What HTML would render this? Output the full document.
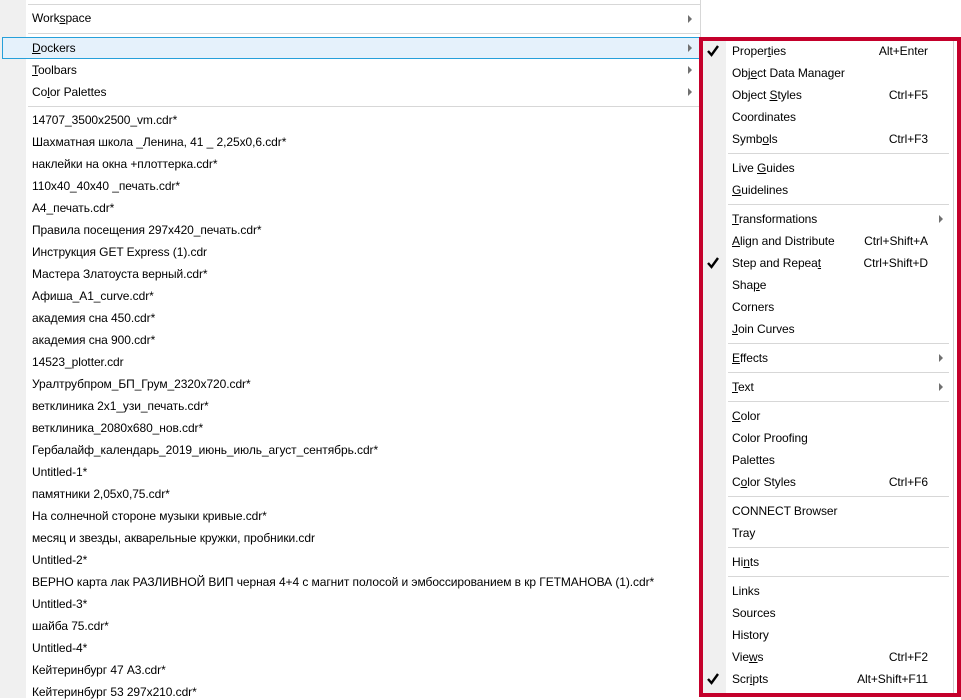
<!DOCTYPE html>
<html><head><meta charset="utf-8"><style>
*{margin:0;padding:0;box-sizing:border-box}
body{width:961px;height:698px;overflow:hidden;background:#fff;position:relative;font-family:"Segoe UI","Liberation Sans","DejaVu Sans",sans-serif;font-size:12px;letter-spacing:-0.07px;color:#000}
.a{position:absolute;white-space:nowrap;line-height:16px}
.sep{position:absolute;height:1px;background:#d7d7d7}
.arr{position:absolute;width:0;height:0;border-top:4px solid transparent;border-bottom:4px solid transparent;border-left:4px solid #707070}
u{text-decoration:underline}
.r{position:absolute;white-space:nowrap;line-height:16px;right:0;text-align:right}
</style></head><body>
<div style="position:absolute;left:0;top:0;width:26px;height:698px;background:#f0f0f0"></div>
<div style="position:absolute;left:700px;top:0;width:1px;height:40px;background:#d7d7d7"></div>
<div class="sep" style="left:28px;top:4px;width:672px"></div>
<div class="sep" style="left:28px;top:33px;width:672px"></div>
<div class="sep" style="left:28px;top:106px;width:672px"></div>
<div style="position:absolute;left:2px;top:37px;width:698px;height:22px;background:#e5f1fb;border:1px solid #26a0da"></div>
<div class="a" style="left:32px;top:10px">Work<u>s</u>pace</div>
<div class="arr" style="left:688px;top:15px"></div>
<div class="a" style="left:32px;top:40px"><u>D</u>ockers</div>
<div class="arr" style="left:688px;top:44px"></div>
<div class="a" style="left:32px;top:62px"><u>T</u>oolbars</div>
<div class="arr" style="left:688px;top:66px"></div>
<div class="a" style="left:32px;top:84px">Co<u>l</u>or Palettes</div>
<div class="arr" style="left:688px;top:88px"></div>
<div class="a" style="left:32px;top:112px">14707_3500x2500_vm.cdr*</div>
<div class="a" style="left:32px;top:134px">Шахматная школа _Ленина, 41 _ 2,25х0,6.cdr*</div>
<div class="a" style="left:32px;top:156px">наклейки на окна +плоттерка.cdr*</div>
<div class="a" style="left:32px;top:178px">110х40_40х40 _печать.cdr*</div>
<div class="a" style="left:32px;top:200px">А4_печать.cdr*</div>
<div class="a" style="left:32px;top:222px">Правила посещения 297х420_печать.cdr*</div>
<div class="a" style="left:32px;top:244px">Инструкция GET Express (1).cdr</div>
<div class="a" style="left:32px;top:266px">Мастера Златоуста верный.cdr*</div>
<div class="a" style="left:32px;top:288px">Афиша_А1_curve.cdr*</div>
<div class="a" style="left:32px;top:310px">академия сна 450.cdr*</div>
<div class="a" style="left:32px;top:332px">академия сна 900.cdr*</div>
<div class="a" style="left:32px;top:354px">14523_plotter.cdr</div>
<div class="a" style="left:32px;top:376px">Уралтрубпром_БП_Грум_2320х720.cdr*</div>
<div class="a" style="left:32px;top:398px">ветклиника 2х1_узи_печать.cdr*</div>
<div class="a" style="left:32px;top:420px">ветклиника_2080х680_нов.cdr*</div>
<div class="a" style="left:32px;top:442px">Гербалайф_календарь_2019_июнь_июль_агуст_сентябрь.cdr*</div>
<div class="a" style="left:32px;top:464px">Untitled-1*</div>
<div class="a" style="left:32px;top:486px">памятники 2,05х0,75.cdr*</div>
<div class="a" style="left:32px;top:508px">На солнечной стороне музыки кривые.cdr*</div>
<div class="a" style="left:32px;top:530px">месяц и звезды, акварельные кружки, пробники.cdr</div>
<div class="a" style="left:32px;top:552px">Untitled-2*</div>
<div class="a" style="left:32px;top:574px">ВЕРНО карта лак РАЗЛИВНОЙ ВИП черная 4+4 с магнит полосой и эмбоссированием в кр ГЕТМАНОВА (1).cdr*</div>
<div class="a" style="left:32px;top:596px">Untitled-3*</div>
<div class="a" style="left:32px;top:618px">шайба 75.cdr*</div>
<div class="a" style="left:32px;top:640px">Untitled-4*</div>
<div class="a" style="left:32px;top:662px">Кейтеринбург 47 А3.cdr*</div>
<div class="a" style="left:32px;top:684px">Кейтеринбург 53 297х210.cdr*</div>

<div style="position:absolute;left:699px;top:37px;width:262px;height:660px;border:4px solid #c4002b;background:#fff">
<div style="position:absolute;left:0;top:0;width:23px;height:652px;background:#f0f0f0"></div>
<div style="position:absolute;left:250px;top:0;width:1px;height:652px;background:#d0d0d0"></div>
</div>
<div style="position:absolute;left:732px;top:0;width:196px;height:698px">
<div class="a" style="left:0;top:43px">Proper<u>t</u>ies</div><div class="r" style="top:43px">Alt+Enter</div>
<div class="a" style="left:0;top:65px">Obj<u>e</u>ct Data Manager</div>
<div class="a" style="left:0;top:87px">Object <u>S</u>tyles</div><div class="r" style="top:87px">Ctrl+F5</div>
<div class="a" style="left:0;top:109px">Coordinates</div>
<div class="a" style="left:0;top:131px">Symb<u>o</u>ls</div><div class="r" style="top:131px">Ctrl+F3</div>
<div class="a" style="left:0;top:160px">Live <u>G</u>uides</div>
<div class="a" style="left:0;top:182px"><u>G</u>uidelines</div>
<div class="a" style="left:0;top:211px"><u>T</u>ransformations</div>
<div class="a" style="left:0;top:233px"><u>A</u>lign and Distribute</div><div class="r" style="top:233px">Ctrl+Shift+A</div>
<div class="a" style="left:0;top:255px">Step and Repea<u>t</u></div><div class="r" style="top:255px">Ctrl+Shift+D</div>
<div class="a" style="left:0;top:277px">Sha<u>p</u>e</div>
<div class="a" style="left:0;top:299px">Corners</div>
<div class="a" style="left:0;top:321px"><u>J</u>oin Curves</div>
<div class="a" style="left:0;top:350px"><u>E</u>ffects</div>
<div class="a" style="left:0;top:379px"><u>T</u>ext</div>
<div class="a" style="left:0;top:408px"><u>C</u>olor</div>
<div class="a" style="left:0;top:430px">Color Proofing</div>
<div class="a" style="left:0;top:452px">Palettes</div>
<div class="a" style="left:0;top:474px">C<u>o</u>lor Styles</div><div class="r" style="top:474px">Ctrl+F6</div>
<div class="a" style="left:0;top:503px">CONNECT Browser</div>
<div class="a" style="left:0;top:525px">Tray</div>
<div class="a" style="left:0;top:554px">Hi<u>n</u>ts</div>
<div class="a" style="left:0;top:583px">Links</div>
<div class="a" style="left:0;top:605px">Sources</div>
<div class="a" style="left:0;top:627px">History</div>
<div class="a" style="left:0;top:649px">Vie<u>w</u>s</div><div class="r" style="top:649px">Ctrl+F2</div>
<div class="a" style="left:0;top:671px">Scr<u>i</u>pts</div><div class="r" style="top:671px">Alt+Shift+F11</div>
</div>
<div class="sep" style="left:728px;top:153px;width:221px"></div>
<div class="sep" style="left:728px;top:204px;width:221px"></div>
<div class="sep" style="left:728px;top:343px;width:221px"></div>
<div class="sep" style="left:728px;top:372px;width:221px"></div>
<div class="sep" style="left:728px;top:401px;width:221px"></div>
<div class="sep" style="left:728px;top:496px;width:221px"></div>
<div class="sep" style="left:728px;top:547px;width:221px"></div>
<div class="sep" style="left:728px;top:576px;width:221px"></div>
<div class="arr" style="left:939px;top:215px"></div>
<div class="arr" style="left:939px;top:354px"></div>
<div class="arr" style="left:939px;top:383px"></div>
<svg style="position:absolute;left:706px;top:44px" width="14" height="14"><path d="M2 7 L5.5 11 L12 2" stroke="#000" stroke-width="2.4" fill="none"/></svg>
<svg style="position:absolute;left:706px;top:256px" width="14" height="14"><path d="M2 7 L5.5 11 L12 2" stroke="#000" stroke-width="2.4" fill="none"/></svg>
<svg style="position:absolute;left:706px;top:672px" width="14" height="14"><path d="M2 7 L5.5 11 L12 2" stroke="#000" stroke-width="2.4" fill="none"/></svg>
</body></html>
